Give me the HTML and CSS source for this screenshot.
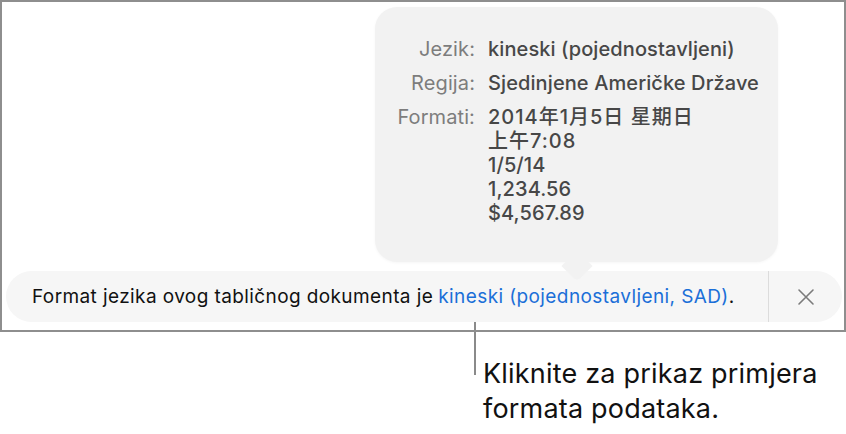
FILE: index.html
```html
<!DOCTYPE html>
<html lang="hr">
<head>
<meta charset="utf-8">
<title>Format jezika</title>
<link rel="stylesheet" href="styles.css">
</head>
<body>
  <div class="frame">
    <div class="popover">
      <dl class="info">
        <dt>Jezik:</dt>
        <dd>kineski (pojednostavljeni)</dd>
        <dt>Regija:</dt>
        <dd>Sjedinjene Američke Države</dd>
        <dt>Formati:</dt>
        <dd class="formats">
          <span class="cjk">2014年1月5日 星期日</span>
          <span class="cjk">上午7:08</span>
          <span>1/5/14</span>
          <span>1,234.56</span>
          <span>$4,567.89</span>
        </dd>
      </dl>
    </div>

    <div class="banner">
      <p class="message">Format jezika ovog tabličnog dokumenta je <a class="link" href="#">kineski (pojednostavljeni, SAD)</a>.</p>
      <button class="close" type="button" aria-label="Zatvori">
        <svg width="18" height="18" viewBox="0 0 18 18" aria-hidden="true">
          <path d="M2 2 L16 16 M16 2 L2 16" stroke="#7b7b7b" stroke-width="1.6" stroke-linecap="round" fill="none"/>
        </svg>
      </button>
    </div>
  </div>

  <div class="callout">
    <span class="callout-line"></span>
    <p class="callout-text">Kliknite za prikaz primjera<br>formata podataka.</p>
  </div>
</body>
</html>
```

FILE: styles.css
```css
* {
  box-sizing: border-box;
}

html, body {
  margin: 0;
  padding: 0;
  background: #ffffff;
}

body {
  width: 846px;
  height: 434px;
  overflow: hidden;
  font-family: Inter, "Noto Sans CJK SC", sans-serif;
  color: #1d1d1f;
}

.frame {
  position: relative;
  width: 846px;
  height: 332px;
  border: 2px solid #8e8e8e;
  display: flex;
  flex-direction: column;
  justify-content: flex-end;
  padding: 0 2px 8px 4px;
}

/* popover with the locale details, floating above the banner */
.popover {
  position: absolute;
  left: 373px;
  top: 5px;
  width: 403px;
  height: 255px;
  background: #f2f2f2;
  border-radius: 22px;
  box-shadow: 0 1px 3px rgba(0, 0, 0, 0.04);
  padding-top: 30px;
  z-index: 2;
}

.popover::after {
  content: "";
  position: absolute;
  left: 50%;
  bottom: -15px;
  width: 22px;
  height: 22px;
  margin-left: -11px;
  background: #f2f2f2;
  transform: rotate(45deg);
  border-radius: 0 0 5px 0;
}

.info {
  margin: 0;
  display: grid;
  grid-template-columns: 100px auto;
  column-gap: 13px;
  row-gap: 10px;
  font-size: 20px;
  line-height: 24px;
  letter-spacing: 0.1px;
}

.info dt {
  text-align: right;
  color: #7d7d7d;
}

.info dd {
  margin: 0;
  color: #474747;
  font-weight: 500;
}

.formats {
  display: flex;
  flex-direction: column;
}

.cjk {
  letter-spacing: 1px;
}

/* notice bar */
.banner {
  display: flex;
  align-items: stretch;
  height: 51px;
  background: #f6f6f6;
  border-radius: 26px;
}

.message {
  flex: 1;
  margin: 0;
  padding-left: 26px;
  display: flex;
  align-items: center;
  font-size: 19px;
  letter-spacing: 0.4px;
  color: #111111;
  white-space: nowrap;
}

.link {
  color: #1b6fd8;
  text-decoration: none;
  margin-left: 0.27em;
}

.close {
  width: 74px;
  border: 0;
  border-left: 1px solid #dcdcdc;
  background: transparent;
  display: flex;
  align-items: center;
  justify-content: center;
  padding: 0;
}

/* annotation below the window */
.callout {
  display: flex;
  align-items: flex-start;
  margin: -10px 0 0 474px;
}

.callout-line {
  width: 2px;
  height: 53px;
  background: #8a8a8a;
  flex: none;
}

.callout-text {
  margin: 34px 0 0 7px;
  font-size: 27px;
  line-height: 35px;
  letter-spacing: 0.2px;
  color: #111111;
}
```
